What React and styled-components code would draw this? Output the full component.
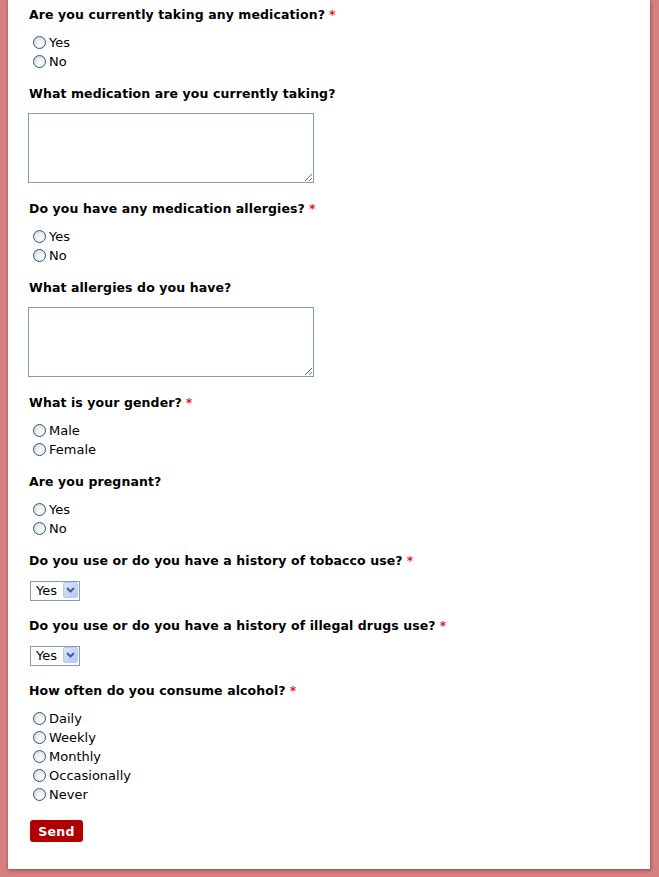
import React from 'react';
import styled, { createGlobalStyle } from 'styled-components';

const GlobalStyle = createGlobalStyle`
  html, body {
    margin: 0;
    padding: 0;
    background: #d57f80;
  }
  body {
    padding: 0 9px 8px 8px;
    font-family: "DejaVu Sans", Verdana, sans-serif;
    color: #000;
  }
`;

const Panel = styled.form`
  background: #fff;
  padding: 6px 0 27px 21px;
  box-shadow: 0 0 3px rgba(80, 20, 20, 0.35), 1px 2px 3px rgba(80, 20, 20, 0.25);
`;

const Field = styled.div`
  margin-bottom: ${(p) => p.$after}px;
`;

const Label = styled.label`
  display: block;
  font-size: 12.5px;
  letter-spacing: 0.1px;
  font-weight: bold;
  line-height: 17px;
  height: 16px;
  margin-bottom: ${(p) => p.$gap}px;
`;

const Star = styled.span`
  color: #e31b1b;
  margin-left: 4px;
`;

const RadioList = styled.div`
  display: flex;
  flex-direction: column;
  padding-left: 4px;
`;

const RadioRow = styled.label`
  display: flex;
  align-items: center;
  height: 19px;
  font-size: 13px;
  line-height: 19px;
`;

const Radio = styled.input.attrs({ type: 'radio' })`
  appearance: none;
  width: 13px;
  height: 13px;
  margin: 0 3px 0 0;
  border: 1px solid #1f5a8c;
  border-radius: 50%;
  background: radial-gradient(circle at 65% 70%, #ffffff 0%, #f1f0ea 40%, #d3d1c6 100%);
  box-sizing: border-box;
`;

const TextArea = styled.textarea`
  display: block;
  width: 286px;
  height: 70px;
  margin: 0 0 0 -1px;
  box-sizing: border-box;
  border: 1px solid #7f9db9;
  padding: 2px;
  font-family: inherit;
  font-size: 13px;
  resize: both;
`;

const SelectWrap = styled.div`
  position: relative;
  width: 50px;
  height: 20px;
  margin-left: 1px;
`;

const Select = styled.select`
  appearance: none;
  width: 50px;
  height: 20px;
  box-sizing: border-box;
  border: 1px solid #7f9db9;
  border-radius: 0;
  background: #fff;
  padding: 0 0 0 5px;
  font-family: inherit;
  font-size: 13px;
  color: #000;
`;

const ArrowBtn = styled.span`
  position: absolute;
  top: 2px;
  right: 2px;
  width: 15px;
  height: 16px;
  box-sizing: border-box;
  border: 1px solid #b8cbf5;
  border-radius: 2px;
  background: linear-gradient(135deg, #dbe5fd 0%, #c2d3fb 60%, #b0c6f8 100%);
  display: flex;
  align-items: center;
  justify-content: center;
  pointer-events: none;
`;

const SendButton = styled.button`
  margin-left: 1px;
  width: 53px;
  height: 22px;
  border: none;
  border-radius: 3px;
  background: #b00000;
  color: #fff;
  font-family: inherit;
  font-size: 12.5px;
  font-weight: bold;
  letter-spacing: 0.3px;
  padding: 0;
  cursor: pointer;
`;

const Chevron = () => (
  <svg width="9" height="6" viewBox="0 0 9 6">
    <path d="M1 1 L4.5 4.5 L8 1" fill="none" stroke="#4d6185" strokeWidth="2" />
  </svg>
);

const RadioField = ({ name, label, required, options, after }) => (
  <Field $after={after}>
    <Label $gap={11}>
      {label}
      {required && <Star>*</Star>}
    </Label>
    <RadioList>
      {options.map((o) => (
        <RadioRow key={o}>
          <Radio name={name} value={o} />
          {o}
        </RadioRow>
      ))}
    </RadioList>
  </Field>
);

const TextField = ({ label }) => (
  <Field $after={17}>
    <Label $gap={12}>{label}</Label>
    <TextArea />
  </Field>
);

const SelectField = ({ label }) => (
  <Field $after={17}>
    <Label $gap={12}>
      {label}
      <Star>*</Star>
    </Label>
    <SelectWrap>
      <Select defaultValue="Yes">
        <option>Yes</option>
        <option>No</option>
      </Select>
      <ArrowBtn>
        <Chevron />
      </ArrowBtn>
    </SelectWrap>
  </Field>
);

const App = () => (
  <>
    <GlobalStyle />
    <Panel onSubmit={(e) => e.preventDefault()}>
      <RadioField name="med" label="Are you currently taking any medication?" required options={['Yes', 'No']} after={14} />
      <TextField label="What medication are you currently taking?" />
      <RadioField name="allergy" label="Do you have any medication allergies?" required options={['Yes', 'No']} after={14} />
      <TextField label="What allergies do you have?" />
      <RadioField name="gender" label="What is your gender?" required options={['Male', 'Female']} after={14} />
      <RadioField name="pregnant" label="Are you pregnant?" options={['Yes', 'No']} after={14} />
      <SelectField label="Do you use or do you have a history of tobacco use?" />
      <SelectField label="Do you use or do you have a history of illegal drugs use?" />
      <RadioField
        name="alcohol"
        label="How often do you consume alcohol?"
        required
        options={['Daily', 'Weekly', 'Monthly', 'Occasionally', 'Never']}
        after={16}
      />
      <SendButton type="submit">Send</SendButton>
    </Panel>
  </>
);

export default App;
